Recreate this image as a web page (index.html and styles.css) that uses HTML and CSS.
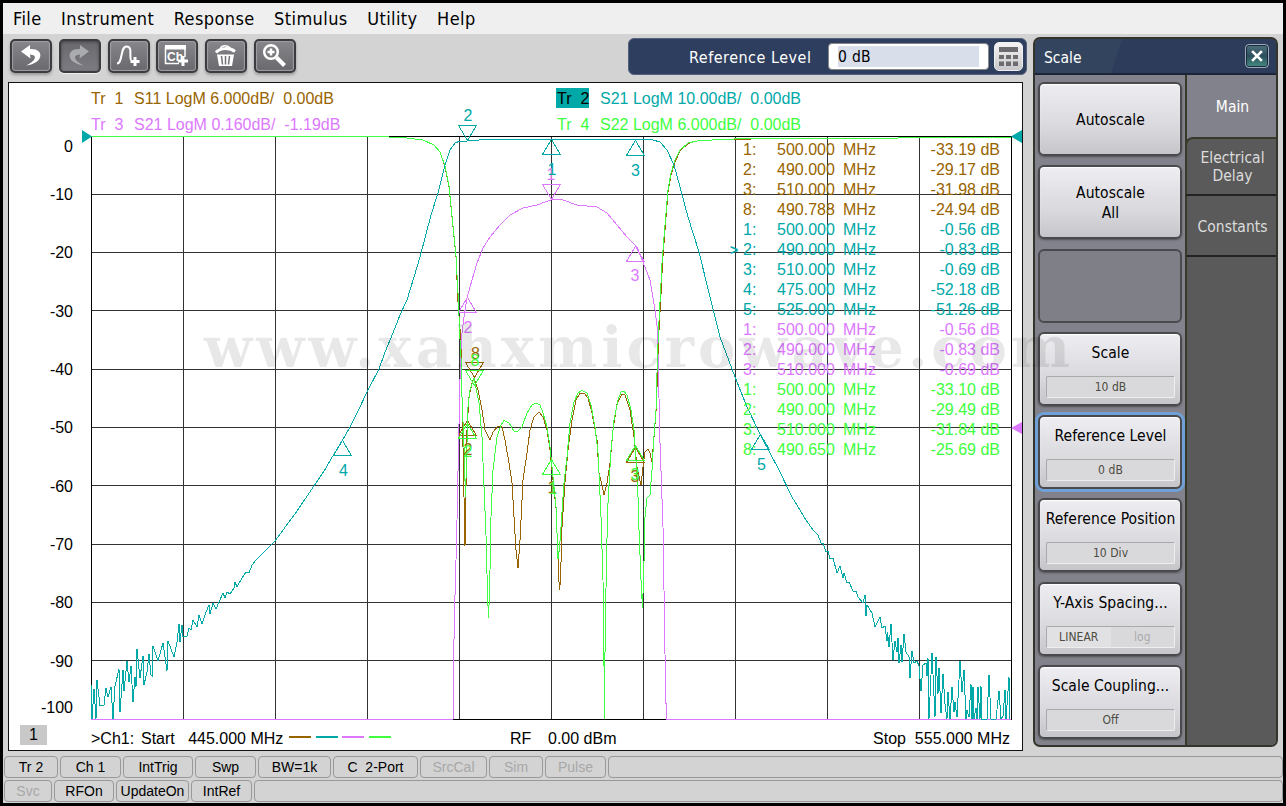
FILE: index.html
```
<!doctype html>
<html lang="en">
<head>
<meta charset="UTF-8">
<title>Network Analyzer</title>
<link rel="stylesheet" href="styles.css">
</head>
<body>
<div class="app">
	<nav class="menu">
		<span>File</span><span>Instrument</span><span>Response</span><span>Stimulus</span><span>Utility</span><span>Help</span>
	</nav>

	<div class="main">
		<div class="left">
			<div class="toolbar">
				<button class="tool" title="Undo"><svg viewBox="2 2 38 30"><path d="M11 12.500 L20 6 V10 C34 9 35 24 16 26.500 C26 22 28 16 20 15.500 L20.500 19.500 Z" fill="#fff"/></svg></button>
				<button class="tool off" title="Redo"><svg viewBox="2 2 38 30"><path d="M30 12.500 L21 6 V10 C7 9 6 24 25 26.500 C15 22 13 16 21 15.500 L20.500 19.500 Z" fill="#aaabaf"/></svg></button>
				<button class="tool" title="Add trace"><svg viewBox="2 2 38 30"><path d="M9 24.500 C15 24.500 12 7.500 18.500 7.500 C25 7.500 21 17 23 21" fill="none" stroke="#fff" stroke-width="2"/><path d="M27 18 V27 M22.500 22.500 H31.500" stroke="#fff" stroke-width="3"/></svg></button>
				<button class="tool" title="Add channel"><svg viewBox="2 2 38 30"><path d="M29 8 V18 M23 24.500 H9.500 V8" fill="none" stroke="#fff" stroke-width="1.500"/><path d="M9 6 H30 V10.500 H9 Z" fill="#fff"/><text x="11" y="21.500" class="ch">Ch</text><path d="M27 17 V27 M22 22 H32" stroke="#fff" stroke-width="3"/></svg></button>
				<button class="tool" title="Delete"><svg viewBox="2 2 38 30"><path d="M12 15.500 H29 L27 27 H14 Z" fill="#fff"/><path d="M16.500 17 L17.500 25.500 M20.500 17 V25.500 M24.500 17 L23.500 25.500" stroke="#717176" stroke-width="1.500"/><path d="M11 13.500 C15 8.500 25 8.500 30 12.500" fill="none" stroke="#fff" stroke-width="3"/><path d="M15.500 9 C17 6 23 6 25.500 9.500" fill="none" stroke="#fff" stroke-width="1.500"/></svg></button>
				<button class="tool" title="Zoom"><svg viewBox="2 2 38 30"><circle cx="17" cy="13" r="6.800" fill="none" stroke="#fff" stroke-width="2.500"/><path d="M17 9.500 V16.500 M13.500 13 H20.500" stroke="#fff" stroke-width="2.500"/><path d="M22.500 18.500 L30.500 26.500" stroke="#fff" stroke-width="4"/></svg></button>
				<div class="entry">
					<label>Reference Level</label>
					<div class="field"><span>0 dB</span></div>
					<button class="keypad"><svg viewBox="0 0 27 27"><path d="M4 4 H23 V9 H4 Z M4 12 H9 V16 H4 Z M11 12 H16 V16 H11 Z M18 12 H23 V16 H18 Z M4 18.500 H9 V23 H4 Z M11 18.500 H16 V23 H11 Z M18 18.500 H23 V23 H18 Z" fill="#6c6c70"/></svg></button>
				</div>
			</div>

			<div class="chart">
				<!-- one svg unit = one pixel of the window -->
				<svg class="plot" viewBox="9 83 1013 667">
					<defs>
						<path id="up" d="M0 0 L-9 15 H9 Z"/>
						<path id="down" d="M0 0 L-9 -15 H9 Z"/>
					</defs>
					<g class="grid">
						<path d="M183.500 136V719 M275.500 136V719 M367.500 136V719 M459.500 136V719 M551.500 136V719 M643.500 136V719 M735.500 136V719 M827.500 136V719 M919.500 136V719"/>
						<path d="M91 194.500H1011 M91 252.500H1011 M91 310.500H1011 M91 369.500H1011 M91 427.500H1011 M91 485.500H1011 M91 544.500H1011 M91 602.500H1011 M91 660.500H1011"/>
						<path class="frame" d="M91.500 136.500 H1011.500 V719.500 H91.500 Z"/>
					</g>
					<g class="axis">
						<text x="73" y="152">0</text>
						<text x="73" y="200">-10</text>
						<text x="73" y="258">-20</text>
						<text x="73" y="317">-30</text>
						<text x="73" y="375">-40</text>
						<text x="73" y="433">-50</text>
						<text x="73" y="492">-60</text>
						<text x="73" y="550">-70</text>
						<text x="73" y="608">-80</text>
						<text x="73" y="667">-90</text>
						<text x="73" y="713">-100</text>
					</g>
					<!-- Tr 1 -->
					<g class="trace t1">
						<polyline points="380,136.500 407,138 423,140 434,145 440,152 445,167 449,187 453,227 456,257 458,302 461,342 462,397 463,447 464,497 465,546 466,487 467,430 469,397 472,383 474,378 478,390 482,410 485,430 490,440 493,432 498,426 502,427 505,440 509,463 512,483 514,517 516,550 518,568 520,540 521,520 523,480 527,453 530,430 534,417 539,412 543,417 547,430 550,450 553,480 556,508 557,533 559,582 559.500,590 560.500,580 562,527 565,482 568,450 572,420 576,400 580,393 584,393 588,398 592,413 597,440 599,473 602,485 604,495 607,483 610,463 613,430 617,404 622,394 625,395 630,410 634,437 637,467 641,485 643,467 645,452 648,449 650,453 652,462 654,437 656,412 657.500,375 659,330 661,294 662.500,263 664.500,237 668,192 671,175 675,162 680,151 688,143.500 697,141 712,140 752,139 898,138.500"/>
						<use href="#up" x="467.500" y="420.500"/><use href="#down" x="474.500" y="377.500"/><use href="#up" x="551.500" y="459.500"/><use href="#up" x="635.500" y="447.500"/>
					</g>
					<!-- Tr 3 -->
					<g class="trace t3">
						<polyline points="453,719 453,693 454.500,613 456,560 457,520 458.500,447 460.500,357 462,333 464,317 467,298 472,280 477,263 483,248 490,237 500,225 510,215 523,208 537,205 552,199.500 563,200 577,205 597,207 607,213 617,225 627,237 637,247 643,262 650,280 655,310 657.500,330 660,443 663,527 664.500,620 665.500,687 666.500,719"/>
						<path d="M91 719.500H453 M666 719.500H1011"/>
						<use href="#down" x="551.500" y="199.500"/><use href="#up" x="467.500" y="297.500"/><use href="#up" x="635.500" y="246.500"/>
					</g>
					<!-- Tr 4 -->
					<g class="trace t4">
						<polyline points="91,136.500 380,136.500 407,138 423,140 434,145 440,152 445,166 449,186 453,226 456,256 458.500,302 459.500,330 461,357 462,397 464,447 465.500,497 468,407 470,390 474,378 479,403 482,437 484,487 486,535 487.500,593 488.500,618 489.500,593 490.500,547 491,517 493,470 497,437 501,425 504,420.500 509,423 514,431 517,432 522,427 527,413 532,405 536,403 540,405 543,413 547,427 550,447 553,477 556,507 558,559 559.500,548 561,527 564,483 567,457 570,423 574,402 578,393 582,390.500 587,393 591,405 595,427 598,453 599.500,483 601,517 603,580 604,666 604.500,719 605,652 606.500,556 608,503 611,450 614,420 618,400 621,392 624,391 627,395 631,410 634,430 636,460 638,497 639,530 641,580 642.500,608 643.500,580 644.500,543 645,517 647,498 650,495 652,470 653.500,443 656,410 657,373 658.500,330 660.500,293 662,263 664,237 666,213 668,190 671,173 675,160 680,150 688,143 697,141 712,140 734,139 752,138 898,138 899,137.500 1011,137.500"/>
						<use href="#up" x="467.500" y="423.500"/><use href="#down" x="474.500" y="385.500"/><use href="#up" x="551.500" y="459.500"/><use href="#up" x="635.500" y="445.500"/>
					</g>
					<!-- Tr 2 -->
					<g class="trace t2">
						<polyline points="91,684 92,719 94,689 96,719 97,680 100,706 104,705 106,688 108,697 111,687 113,719 115,686 119,669 120,712 123,670 124,691 127,661 129,682 131,666 133,702 135,677 136,687 137,649 140,678 143,656 144,685 147,672 149,654 151,675 152.500,676 153,646 158,661 163,643 167,671 168,641 174,657 177,642 179,624 180,642 182,625 183,637 187,636 189,628 191,630 193,620 197,627 199,615 202,624 206,612 209,605 210,614 213,603 216,609 223,593 225,598 227,592 230,594 234,588 235,582 237,587 242,578 246,572 249,573 252,565 256,560 275,541 297,511 318,480 326,468 331,459 342,441 350,427 358,411 368,390 379,369 385,352 393,333 400,315 407,300 414,277 420,257 431,215 438,193 445,165 450,150 455,143 460,141 467,141 485,139.500 635,139.500 653,140 660,142 667,150 674,165 680,187 688,217 699,252 710,297 720,337 735,377 747,407 760,434 779,470 792,497 806,520 813,530 818,535 821,543 823,543 826,552 828,551 830,559 833,558 837,573 840,566 843,578 844,573 847,583 849,582 853,591 856,591 858,597 863,603 865,595 866,616 867,605 872,613 875,627 880,617 882,628 885,626 887,641 887.500,632 889,647 891,624 893,660 895,641 897,652 898,638 899,663 901,645 902,662 904,634 906,652 909,657 910,678 912,651 914,663 917,661 919,666 921,691 923,665 926,663 927,676 928,658 929,719 932,653 935,717 936,657 938,694 939,668 941,713 943,674 945,704 947,719 948,692 950,719 952,687 954,712 955,702 957,717 960,661 962,692 964,670 966,719 967,710 969,717 971,684 972,719 973,687 974,719 976,708 977,719 978,687 980,719 981,686 982,719 987,719 989,675 991,719 996,719 999,691 1001,719 1003,716 1005,690 1006,719 1009,677 1010,719"/>
						<use href="#down" x="467.500" y="140.500"/><use href="#up" x="551.500" y="139.500"/><use href="#up" x="635.500" y="140.500"/><use href="#up" x="342.500" y="440.500"/><use href="#up" x="760.500" y="434.500"/>
					</g>
					<!-- marker numbers -->
					<g class="nums">
						<text class="t1" x="475.500" y="359">8</text><text class="t1" x="468" y="455">2</text><text class="t1" x="552" y="493">1</text><text class="t1" x="635" y="482">3</text>
						<text class="t4" x="475" y="366">8</text><text class="t4" x="468" y="457">2</text><text class="t4" x="553" y="494">1</text><text class="t4" x="635" y="480">3</text>
						<text class="t3" x="551" y="180">1</text><text class="t3" x="468" y="333">2</text><text class="t3" x="635" y="281">3</text>
						<text class="t2" x="468" y="121">2</text><text class="t2" x="552" y="175">1</text><text class="t2" x="635.500" y="176">3</text><text class="t2" x="343.500" y="476">4</text><text class="t2" x="761.500" y="470">5</text>
					</g>
					<!-- reference position arrows -->
					<path d="M82 130 L92 136.500 L82 143 Z M1022 130 L1011 136.500 L1022 143 Z" fill="#00a8a8"/>
					<path d="M1022 422 L1011 428 L1022 434 Z" fill="#dc78ff"/>
					<g class="dash">
						<path class="t1" d="M289 737H311"/><path class="t2" d="M316 737H338"/><path class="t3" d="M342 737H364"/><path class="t4" d="M369 737H391"/>
					</g>
				</svg>

				<div class="titles">
					<div class="t1"><b>Tr&nbsp; 1</b><span>S11 LogM 6.000dB/&nbsp; 0.00dB</span></div>
					<div class="t2"><b class="active">Tr&nbsp; 2</b><span>S21 LogM 10.00dB/&nbsp; 0.00dB</span></div>
					<div class="t3"><b>Tr&nbsp; 3</b><span>S21 LogM 0.160dB/&nbsp; -1.19dB</span></div>
					<div class="t4"><b>Tr&nbsp; 4</b><span>S22 LogM 6.000dB/&nbsp; 0.00dB</span></div>
				</div>

				<table class="markers">
					<tr class="t1"><td></td><td>1:</td><td>500.000</td><td>MHz</td><td>-33.19 dB</td></tr>
					<tr class="t1"><td></td><td>2:</td><td>490.000</td><td>MHz</td><td>-29.17 dB</td></tr>
					<tr class="t1"><td></td><td>3:</td><td>510.000</td><td>MHz</td><td>-31.98 dB</td></tr>
					<tr class="t1"><td></td><td>8:</td><td>490.788</td><td>MHz</td><td>-24.94 dB</td></tr>
					<tr class="t2"><td></td><td>1:</td><td>500.000</td><td>MHz</td><td>-0.56 dB</td></tr>
					<tr class="t2"><td>&gt;</td><td>2:</td><td>490.000</td><td>MHz</td><td>-0.83 dB</td></tr>
					<tr class="t2"><td></td><td>3:</td><td>510.000</td><td>MHz</td><td>-0.69 dB</td></tr>
					<tr class="t2"><td></td><td>4:</td><td>475.000</td><td>MHz</td><td>-52.18 dB</td></tr>
					<tr class="t2"><td></td><td>5:</td><td>525.000</td><td>MHz</td><td>-51.26 dB</td></tr>
					<tr class="t3"><td></td><td>1:</td><td>500.000</td><td>MHz</td><td>-0.56 dB</td></tr>
					<tr class="t3"><td></td><td>2:</td><td>490.000</td><td>MHz</td><td>-0.83 dB</td></tr>
					<tr class="t3"><td></td><td>3:</td><td>510.000</td><td>MHz</td><td>-0.69 dB</td></tr>
					<tr class="t4"><td></td><td>1:</td><td>500.000</td><td>MHz</td><td>-33.10 dB</td></tr>
					<tr class="t4"><td></td><td>2:</td><td>490.000</td><td>MHz</td><td>-29.49 dB</td></tr>
					<tr class="t4"><td></td><td>3:</td><td>510.000</td><td>MHz</td><td>-31.84 dB</td></tr>
					<tr class="t4"><td></td><td>8:</td><td>490.650</td><td>MHz</td><td>-25.69 dB</td></tr>
				</table>

				<div class="sweep">
					<span class="win">1</span>
					<span class="ch1">&gt;Ch1:</span>
					<span class="start">Start&nbsp;&nbsp; 445.000 MHz</span>
					<span class="rf">RF</span>
					<span class="power">0.00 dBm</span>
					<span class="stop">Stop&nbsp; 555.000 MHz</span>
				</div>
			</div>
		</div>

		<aside class="panel">
			<header><span>Scale</span><button class="close"><svg viewBox="0 0 18 18"><path d="M5 5 L13 13 M13 5 L5 13" stroke="#fff" stroke-width="2.200"/></svg></button></header>
			<div class="body">
				<div class="keys">
					<button class="key">Autoscale</button>
					<button class="key">Autoscale<br>All</button>
					<button class="key blank"></button>
					<button class="key val">Scale<span>10 dB</span></button>
					<button class="key val sel">Reference Level<span>0 dB</span></button>
					<button class="key val">Reference Position<span>10 Div</span></button>
					<button class="key val">Y-Axis Spacing...<span class="two"><i>LINEAR</i><i>log</i></span></button>
					<button class="key val">Scale Coupling...<span>Off</span></button>
				</div>
				<div class="tabs">
					<div class="tab on">Main</div>
					<div class="tab delay">Electrical<br>Delay</div>
					<div class="tab const">Constants</div>
					<div class="rest"></div>
				</div>
			</div>
		</aside>
	</div>

	<div class="status one">
		<span>Tr 2</span><span>Ch 1</span><span>IntTrig</span><span>Swp</span><span>BW=1k</span><span>C&nbsp; 2-Port</span><span class="dim">SrcCal</span><span class="dim">Sim</span><span class="dim">Pulse</span><span></span>
	</div>
	<div class="status two">
		<span class="dim">Svc</span><span>RFOn</span><span>UpdateOn</span><span>IntRef</span><span></span>
	</div>

	<svg class="watermark" viewBox="0 0 880 70"><text x="1" y="52" textLength="866">www.xahxmicrowave.com</text></svg>
</div>
</body>
</html>
```
FILE: styles.css
```
*{
	box-sizing:border-box;
}
body{
	margin:0;
	padding:3px;
	background:#000;
	font-family:"Liberation Sans",Arial,sans-serif;
	font-size:16px;
	overflow:hidden;
}
button{
	padding:0;
	font:inherit;
	color:inherit;
}
.app{
	position:relative;
	width:1280px;
	height:800px;
	background:#d3d3d3;
}
.menu, .entry label, .field, .panel{
	font-family:"DejaVu Sans Condensed","DejaVu Sans",sans-serif;
	font-stretch:condensed;
}
.menu{
	display:flex;
	gap:19.5px;
	height:31px;
	padding-left:10px;
	background:#efefef;
	font-size:18px;
	letter-spacing:.4px;
	line-height:31px;
}
.main{
	display:flex;
	height:722px;
}
.left{
	width:1030px;
	padding-left:5px;
}

/* toolbar */
.toolbar{
	display:flex;
	gap:6.8px;
	height:48px;
	padding:5px 0 0 2px;
}
.tool{
	width:42px;
	height:34px;
	border:2px solid #3c3c40;
	border-radius:5px;
	background:linear-gradient(#86868b,#68686d);
	box-shadow:inset 0 0 1px 1px #a0a0a5, 0 2px 3px #999;
}
.tool svg{
	display:block;
	width:38px;
	height:30px;
}
.tool.off{
	background:linear-gradient(#68686d,#7c7c82);
	box-shadow:inset 0 1px 3px #444, 0 1px 1px #eee;
}
.ch{
	font:bold 12px "Liberation Sans",sans-serif;
	fill:#fff;
}
.entry{
	display:flex;
	width:399px;
	height:37px;
	margin:-1px 6px 0 auto;
	padding:4px 3px 0 60px;
	border-radius:6px;
	border:1px solid #53617c;
	background:#2e3e5e;
	color:#fff;
}
.entry label{
	width:139px;
	font-size:16px;
	letter-spacing:.5px;
	line-height:29px;
	white-space:nowrap;
}
.field{
	width:161px;
	height:27px;
	padding:2px 9px;
	border:1px solid #888;
	border-radius:4px;
	background:#fff;
	color:#000;
	font-size:15.5px;
	letter-spacing:.3px;
}
.field span{
	display:block;
	height:21px;
	background:#d8deea;
	line-height:22px;
}
.keypad{
	width:29px;
	height:29px;
	margin:-1px 0 0 5px;
	border:1px solid #eee;
	border-radius:5px;
	background:linear-gradient(#f4f4f4,#c8c8cc);
}
.keypad svg{
	display:block;
}

/* chart */
.chart{
	position:relative;
	width:1015px;
	height:669px;
	border:1px solid #111;
	background:#fff;
}
.plot{
	display:block;
	width:1013px;
	height:667px;
}
.grid path{
	fill:none;
	stroke:#333;
	shape-rendering:crispEdges;
}
.grid .frame{
	stroke:#000;
}
.axis text{
	text-anchor:end;
}
.nums text{
	text-anchor:middle;
}
.trace{
	fill:none;
	stroke-width:1;
	shape-rendering:crispEdges;
}
.dash path{
	stroke-width:2;
}
.trace.t1, .dash .t1{ stroke:#986400; }
.trace.t2, .dash .t2{ stroke:#00a8a8; }
.trace.t3, .dash .t3{ stroke:#dc78ff; }
.trace.t4, .dash .t4{ stroke:#40ff40; }
.nums .t1{ fill:#986400; }
.nums .t2{ fill:#00a8a8; }
.nums .t3{ fill:#dc78ff; }
.nums .t4{ fill:#40ff40; }
div.t1, tr.t1{ color:#986400; }
div.t2, tr.t2{ color:#00a8a8; }
div.t3, tr.t3{ color:#dc78ff; }
div.t4, tr.t4{ color:#40ff40; }
.titles{
	position:absolute;
	left:81px;
	top:5px;
	display:grid;
	grid-template-columns:466px 300px;
	row-gap:6px;
	line-height:22px;
	white-space:nowrap;
}
.titles div{
	display:flex;
	gap:11px;
	height:20px;
}
.titles b{
	width:33px;
	padding-left:1px;
	font-weight:normal;
}
.titles .active{
	background:#00a8a8;
	color:#000;
}
.markers{
	position:absolute;
	left:721px;
	top:57px;
	width:270px;
	border-collapse:collapse;
	table-layout:fixed;
}
.markers td{
	height:20px;
	padding:0;
	line-height:20px;
	white-space:nowrap;
}
.markers td:nth-child(1){ width:13px; font-size:14px; font-weight:bold; }
.markers td:nth-child(2){ width:34px; }
.markers td:nth-child(3){ width:66px; }
.markers td:nth-child(4){ width:60px; }
.markers td:nth-child(5){ text-align:right; }
.sweep{
	position:absolute;
	left:11px;
	right:12px;
	bottom:5px;
	display:flex;
	line-height:20px;
	white-space:nowrap;
}
.win{
	width:27px;
	height:20px;
	margin-right:44px;
	background:#c8c8c8;
	text-align:center;
}
.ch1, .start, .rf, .power, .stop{
	position:relative;
	top:4px;
}
.ch1{
	width:50px;
}
.start{
	width:369px;
}
.rf{
	width:38px;
}
.stop{
	margin-left:auto;
}

/* side panel */
.panel{
	width:245px;
	height:710px;
	margin-top:3px;
	border:2px solid #33352c;
	border-radius:7px;
	background:#5a5a5a;
	overflow:hidden;
}
.panel header{
	display:flex;
	justify-content:space-between;
	height:36px;
	padding:5px 7px 0 9px;
	border-bottom:2px solid #1c2538;
	background:linear-gradient(108deg,#33445f 34%,#2e3c5c 35%);
	color:#fff;
	font-size:15.5px;
	line-height:28px;
}
.close{
	width:24px;
	height:24px;
	border:1px solid #9aa9b8;
	border-radius:4px;
	background:linear-gradient(#50707d,#2b4f5e 50%,#458e82);
	box-shadow:inset 0 0 0 1px #1d2a3e;
}
.close svg{
	display:block;
	width:22px;
	height:22px;
}
.body{
	display:flex;
	height:670px;
}
.keys{
	display:flex;
	flex-direction:column;
	gap:9.3px;
	width:152px;
	padding:7px 0 0 3px;
	border-right:2px solid #373929;
	background:#82828c;
}
.key{
	width:144px;
	height:74px;
	flex:none;
	padding:2px 0 0 1px;
	border:2px solid #4a4a4e;
	border-radius:6px;
	background:linear-gradient(#eeeef2,#d8d8dc 65%,#c6c6ca);
	box-shadow:inset 0 1px 1px #fff, 0 1px 2px #555;
	color:#000;
	font-size:15.5px;
	letter-spacing:.05px;
	line-height:20px;
	white-space:nowrap;
}
.blank{
	background:#7f7f88;
	box-shadow:none;
}
.val{
	display:flex;
	flex-direction:column;
	align-items:center;
	padding-top:9px;
}
.val span{
	width:129px;
	height:22px;
	margin-top:13px;
	border:1px solid #eee;
	border-top-color:#aaa;
	border-left-color:#aaa;
	border-radius:2px;
	background:#d9d9dc;
	color:#4c4b40;
	font-size:12px;
}
.val .two{
	display:flex;
}
.two i{
	flex:1;
	font-style:normal;
	background:#e1e1e4;
}
.two i + i{
	background:none;
	color:#aaa;
}
.sel{
	box-shadow:inset 0 1px 1px #fff, 0 0 0 3px #6fa0d8;
}
.tabs{
	display:flex;
	flex-direction:column;
	width:89px;
	background:#82828c;
	color:#dcdcdc;
	font-size:15.5px;
	line-height:18px;
	text-align:center;
}
.tab{
	display:flex;
	align-items:center;
	justify-content:center;
	padding:2px 0 0 2px;
	border-bottom:2px solid #222;
	background:#5a5a5a;
}
.on{
	height:62px;
	border:0;
	background:#82828c;
	color:#fff;
}
.delay{
	height:59px;
	margin-left:-2px;
	padding-top:0;
	border-top:2px solid #373929;
	border-left:2px solid #373929;
	border-radius:8px 0 0 0;
}
.const{
	height:61px;
}
.rest{
	flex:1;
	background:#5a5a5a;
}

/* status bars */
.status{
	display:grid;
	gap:2px;
	height:24px;
	padding-left:1px;
	font-size:14px;
}
.one{
	grid-template-columns:54px 61px 70px 61px 73px 85px 67px 54px 61px 1fr;
}
.two.status{
	grid-template-columns:48px 60px 73px 61px 1fr;
}
.status span{
	height:22px;
	border:1px solid #999;
	border-radius:4px;
	line-height:21px;
	text-align:center;
	white-space:nowrap;
}
.status .dim{
	color:#a8a8a8;
}

.watermark{
	position:absolute;
	left:200px;
	top:312px;
	width:880px;
	height:70px;
	pointer-events:none;
}
.watermark text{
	font:bold 56px "DejaVu Serif",serif;
	fill:rgba(0,0,0,.09);
}
```
